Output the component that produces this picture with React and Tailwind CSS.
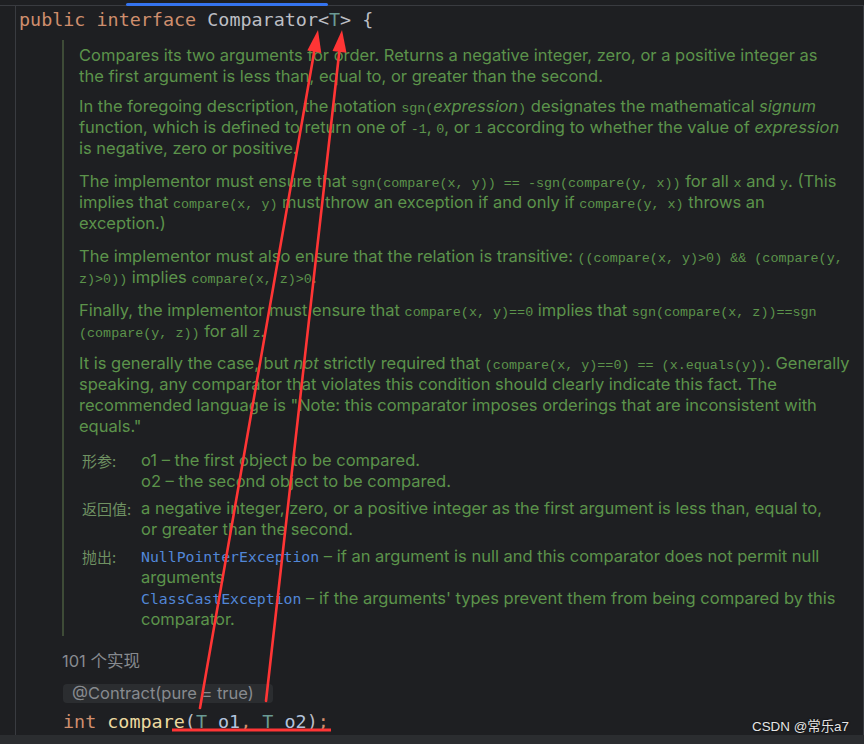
import React from "react";

const mono = { fontFamily: '"DejaVu Sans Mono", "Liberation Mono", monospace' };

function C({ children }) {
  return (
    <span className="font-['Liberation_Mono',monospace] text-[13.4px]">{children}</span>
  );
}

function Line({ children }) {
  return <div className="whitespace-pre h-[21px] leading-[21px]">{children}</div>;
}

function Tag({ label, children }) {
  return (
    <div className="flex">
      <div className="w-[62px] pl-[3px] text-[15px] leading-[21px] text-[#6f9162] font-['Noto_Sans_CJK_SC',sans-serif]">
        {label}
      </div>
      <div>{children}</div>
    </div>
  );
}

function Exc({ children }) {
  return (
    <span className="text-[#5287d8] text-[14.8px] font-['DejaVu_Sans_Mono',monospace]">{children}</span>
  );
}

export default function App() {
  return (
    <div className="relative w-[864px] h-[744px] overflow-hidden bg-[#1e1f22] font-['Inter','Noto_Sans_CJK_SC',sans-serif]">
      {/* tab strip */}
      <div className="relative h-[6px] border-b border-[#393b40]">
        <div className="absolute left-[126px] top-[3px] w-[202px] h-[3px] rounded-full bg-[#3574f0]" />
      </div>

      <div className="flex h-[729px]">
        <div className="w-[15px]" />
        <div className="flex-1 border-l border-[#393b40] border-r">
          {/* class declaration */}
          <div className="pl-[3px] pt-[2px] h-[26px] leading-[24px] text-[18.4px] whitespace-pre" style={mono}>
            <span className="text-[#cf8e6d]">public interface </span>
            <span className="text-[#bcbec4]">Comparator&lt;</span>
            <span className="text-[#6a9a93]">T</span>
            <span className="text-[#bcbec4]">&gt; {"{"}</span>
          </div>

          {/* rendered javadoc */}
          <div className="ml-[46px] mt-[8px] border-l-2 border-[#3e4b37] pl-[15px] pt-[5px] pb-[6px] text-[16.5px] text-[#5c934b]">
            <div>
              <Line>Compares its two arguments for order. Returns a negative integer, zero, or a positive integer as</Line>
              <Line>the first argument is less than, equal to, or greater than the second.</Line>
            </div>
            <div className="mt-[9px]">
              <Line>
                In the foregoing description, the notation <C>sgn(</C><i>expression</i><C>)</C> designates the mathematical <i>signum</i>
              </Line>
              <Line>
                function, which is defined to return one of <C>-1</C>, <C>0</C>, or <C>1</C> according to whether the value of <i>expression</i>
              </Line>
              <Line>is negative, zero or positive.</Line>
            </div>
            <div className="mt-[12px]">
              <Line>
                The implementor must ensure that <C>sgn(compare(x, y)) == -sgn(compare(y, x))</C> for all <C>x</C> and <C>y</C>. (This
              </Line>
              <Line>
                implies that <C>compare(x, y)</C> must throw an exception if and only if <C>compare(y, x)</C> throws an
              </Line>
              <Line>exception.)</Line>
            </div>
            <div className="mt-[12px]">
              <Line>
                The implementor must also ensure that the relation is transitive: <C>((compare(x, y)&gt;0) &amp;&amp; (compare(y,</C>
              </Line>
              <Line>
                <C>z)&gt;0))</C> implies <C>compare(x, z)&gt;0</C>.
              </Line>
            </div>
            <div className="mt-[12px]">
              <Line>
                Finally, the implementor must ensure that <C>compare(x, y)==0</C> implies that <C>sgn(compare(x, z))==sgn</C>
              </Line>
              <Line>
                <C>(compare(y, z))</C> for all <C>z</C>.
              </Line>
            </div>
            <div className="mt-[11px]">
              <Line>
                It is generally the case, but <i>not</i> strictly required that <C>(compare(x, y)==0) == (x.equals(y))</C>. Generally
              </Line>
              <Line>speaking, any comparator that violates this condition should clearly indicate this fact. The</Line>
              <Line>recommended language is "Note: this comparator imposes orderings that are inconsistent with</Line>
              <Line>equals."</Line>
            </div>

            <div className="mt-[13px] flex flex-col gap-[6px]">
              <Tag label="形参:">
                <Line>o1 – the first object to be compared.</Line>
                <Line>o2 – the second object to be compared.</Line>
              </Tag>
              <Tag label="返回值:">
                <Line>a negative integer, zero, or a positive integer as the first argument is less than, equal to,</Line>
                <Line>or greater than the second.</Line>
              </Tag>
              <Tag label="抛出:">
                <Line>
                  <Exc>NullPointerException</Exc> – if an argument is null and this comparator does not permit null
                </Line>
                <Line>arguments</Line>
                <Line>
                  <Exc>ClassCastException</Exc> – if the arguments' types prevent them from being compared by this
                </Line>
                <Line>comparator.</Line>
              </Tag>
            </div>
          </div>

          {/* implementations hint */}
          <div className="ml-[46px] mt-[15px] h-[21px] leading-[21px] text-[16.5px] text-[#878a8f]">101 个实现</div>

          {/* inlay annotation */}
          <div className="ml-[47px] mt-[12px] w-[210px] h-[19px] rounded-[4px] bg-[#2b2d30] pl-[9px] leading-[19px] text-[16.5px] text-[#878a8f] whitespace-pre">
            @Contract(pure = true)
          </div>

          {/* method declaration */}
          <div className="ml-[47px] mt-[7px] h-[24px] leading-[24px] text-[18.4px] whitespace-pre" style={mono}>
            <span className="text-[#cf8e6d]">int </span>
            <span className="text-[#ecd9a0]">compare</span>
            <span className="text-[#bcbec4]">(</span>
            <span className="text-[#6a9a93]">T </span>
            <span className="text-[#b3c3dc]">o1</span>
            <span className="text-[#cf8e6d]">, </span>
            <span className="text-[#6a9a93]">T </span>
            <span className="text-[#b3c3dc]">o2</span>
            <span className="text-[#bcbec4]">)</span>
            <span className="text-[#cf8e6d]">;</span>
          </div>
        </div>
      </div>

      <div className="h-[9px] bg-[#2b2d30]" />

      {/* watermark */}
      <div className="absolute left-[752px] top-[717px] text-[13.4px] leading-[20px] text-[#e6e6e6] font-['Liberation_Sans','Noto_Sans_CJK_SC',sans-serif] [text-shadow:0_0_2px_#000]">
        CSDN @常乐a7
      </div>

      {/* red annotations */}
      <svg className="absolute inset-0 pointer-events-none" width="864" height="744" viewBox="0 0 864 744">
        <line x1="200" y1="708" x2="314.5" y2="50" stroke="#ff3535" strokeWidth="2.6" strokeLinecap="round" />
        <polygon points="318,30 321.3,53 307.3,50.5" fill="#ff3535" />
        <line x1="266" y1="701" x2="339.5" y2="50" stroke="#ff3535" strokeWidth="2.6" strokeLinecap="round" />
        <polygon points="342,30 346.5,52.7 332.5,51.1" fill="#ff3535" />
        <line x1="172" y1="730" x2="331" y2="730" stroke="#ff3535" strokeWidth="3" />
      </svg>
    </div>
  );
}
